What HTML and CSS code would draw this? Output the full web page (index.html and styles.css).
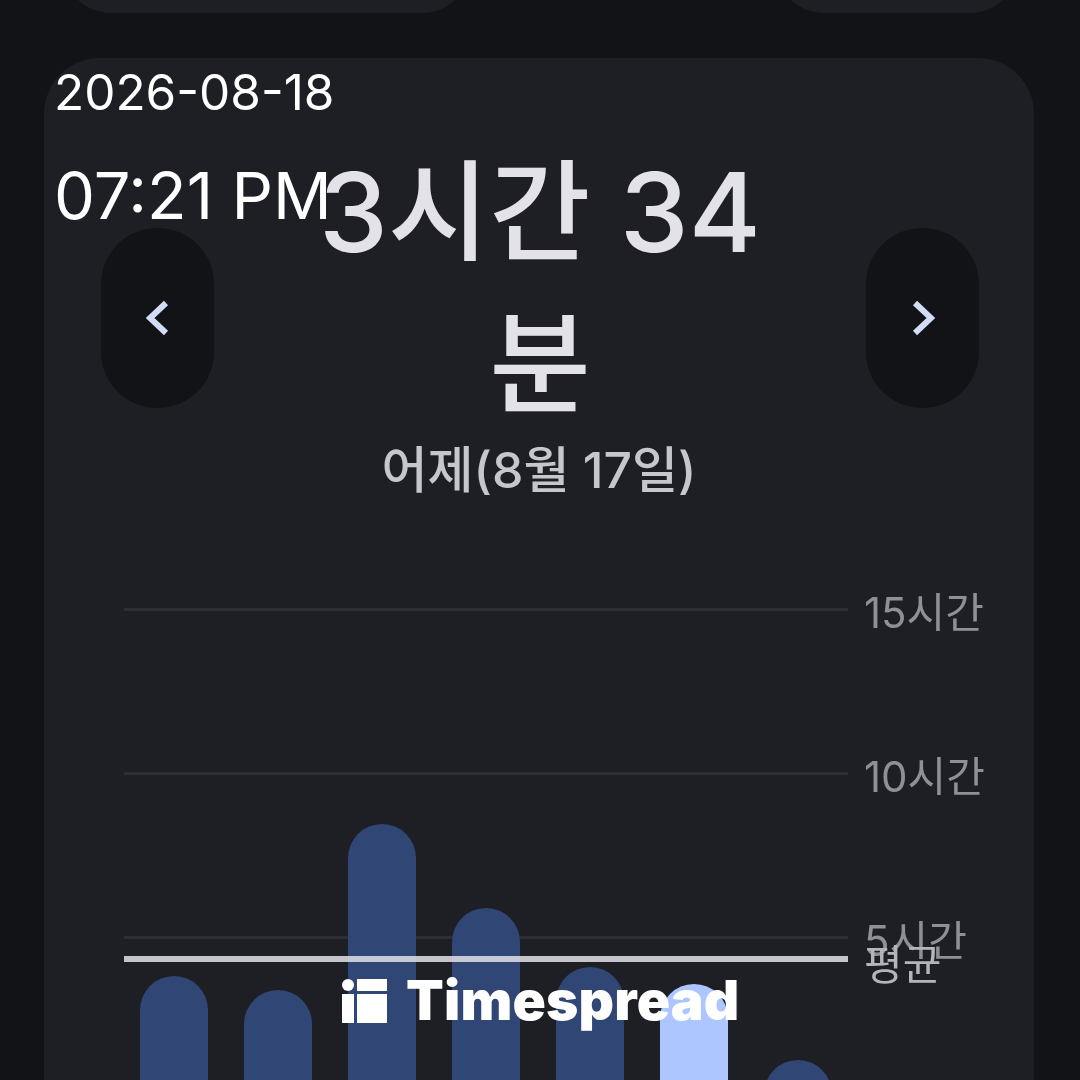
FILE: index.html
```html
<!DOCTYPE html>
<html lang="ko">
<head>
    <meta charset="UTF-8">
    <meta name="viewport" content="width=device-width, initial-scale=1.0">
    <title>Timespread</title>
    <link rel="stylesheet" href="styles.css">
</head>
<body>
    <!-- Capture time stamped over the screenshot -->
    <div class="stamp">
        <div class="stamp-date">2026-08-18</div>
        <div class="stamp-time">07:21 PM</div>
    </div>

    <!-- Bottom of the cards above -->
    <div class="stubs">
        <div class="stub stub-left"></div>
        <div class="stub stub-right"></div>
    </div>

    <div class="card">
        <div class="summary">
            <button class="nav-button">
                <svg width="24" height="36" viewBox="0 0 24 36"><path d="M20 3 L4 18 L20 33" /></svg>
            </button>
            <h1 class="total">3시간 34<br>분</h1>
            <button class="nav-button">
                <svg width="24" height="36" viewBox="0 0 24 36"><path d="M4 3 L20 18 L4 33" /></svg>
            </button>
        </div>
        <div class="day">어제(8월 17일)</div>

        <!-- Usage chart -->
        <div class="chart">
            <div class="grid-row"><div class="grid-line"></div><span class="grid-label">15시간</span></div>
            <div class="grid-row"><div class="grid-line"></div><span class="grid-label">10시간</span></div>
            <div class="grid-row"><div class="grid-line"></div><span class="grid-label">5시간</span></div>

            <div class="bars">
                <div class="bar" style="height: 151px"></div>
                <div class="bar" style="height: 137px"></div>
                <div class="bar" style="height: 303px"></div>
                <div class="bar" style="height: 219px"></div>
                <div class="bar" style="height: 160px"></div>
                <div class="bar bar-active" style="height: 143px"></div>
                <div class="bar" style="height: 67px"></div>
            </div>

            <div class="average">
                <div class="average-line"></div>
                <span class="average-label">평균</span>
            </div>
        </div>
    </div>

    <!-- Watermark -->
    <div class="brand">
        <svg class="brand-mark" width="45" height="44" viewBox="0 0 45 44">
            <circle cx="6" cy="6" r="6" />
            <rect x="0" y="15" width="12" height="29" />
            <rect x="15" y="0" width="30" height="12" />
            <rect x="15" y="15" width="30" height="29" />
        </svg>
        <span class="brand-name">Timespread</span>
    </div>
</body>
</html>
```

FILE: styles.css
```css
body {
    margin: 0;
    height: 1080px;
    overflow: hidden;
    position: relative;
    background-color: #121317;
    font-family: Inter, "Noto Sans CJK KR", sans-serif;
}

/* Time stamp */
.stamp {
    position: absolute;
    left: 54px;
    top: 61px;
    z-index: 5;
    color: #fff;
}

.stamp-date {
    font-size: 49.5px;
    line-height: 62px;
}

.stamp-time {
    margin-top: 34px;
    font-size: 65px;
    line-height: 78px;
}

/* Card stubs at the top */
.stubs {
    display: flex;
    justify-content: space-between;
    height: 100px;
    margin-top: -87px;
    padding: 0 62px 0 63px;
    filter: blur(0.6px);
}

.stub {
    height: 100px;
    background-color: #1e1f24;
    border-radius: 48px;
}

.stub-left {
    width: 407px;
}

.stub-right {
    width: 242px;
}

/* Main card */
.card {
    margin: 45px 46px 0 44px;
    height: 1100px;
    background-color: #1e1f24;
    border-radius: 56px;
    filter: blur(0.6px);
}

.summary {
    display: flex;
    align-items: flex-start;
    padding: 0 55px 0 57px;
}

.nav-button {
    flex: none;
    width: 113px;
    height: 180px;
    margin-top: 170px;
    padding: 0;
    display: flex;
    align-items: center;
    justify-content: center;
    background-color: #121317;
    border: none;
    border-radius: 56px;
}

.nav-button svg {
    fill: none;
    stroke: #d3dbf5;
    stroke-width: 6;
}

.total {
    flex: 1;
    margin: 0;
    padding-top: 78px;
    text-align: center;
    color: #e2e2e8;
    font-size: 110px;
    font-weight: 500;
    line-height: 152px;
}

.day {
    text-align: center;
    color: #c6c6cd;
    font-size: 50px;
    font-weight: 500;
    line-height: 60px;
}

/* Chart */
.chart {
    position: relative;
    height: 600px;
    margin-top: 27px;
    padding-left: 80px;
}

.grid-row {
    display: flex;
    align-items: center;
    height: 164px;
}

.grid-line {
    width: 724px;
    height: 3px;
    background-color: #2e2f35;
}

.grid-label {
    margin-left: 16px;
    color: #8f9097;
    font-size: 42px;
}

.bars {
    position: absolute;
    left: 96px;
    bottom: 0;
    display: flex;
    align-items: flex-end;
    gap: 36px;
}

.bar {
    width: 68px;
    background-color: #304675;
    border-radius: 34px 34px 0 0;
}

.bar-active {
    background-color: #adc6ff;
}

.average {
    position: absolute;
    left: 80px;
    top: 410px;
    display: flex;
    align-items: center;
}

.average-line {
    width: 724px;
    height: 6px;
    background-color: rgba(226, 226, 232, 0.85);
}

.average-label {
    margin-left: 16px;
    color: #b4b5bc;
    font-size: 42px;
    line-height: 44px;
    position: relative;
    top: 6px;
}

/* Watermark */
.brand {
    position: absolute;
    left: 342px;
    top: 979px;
    display: flex;
    align-items: flex-start;
    gap: 19px;
    color: #fff;
}

.brand-mark {
    fill: #fff;
}

.brand-name {
    font-size: 55px;
    font-weight: 900;
    line-height: 42px;
    letter-spacing: 0.2px;
}
```
